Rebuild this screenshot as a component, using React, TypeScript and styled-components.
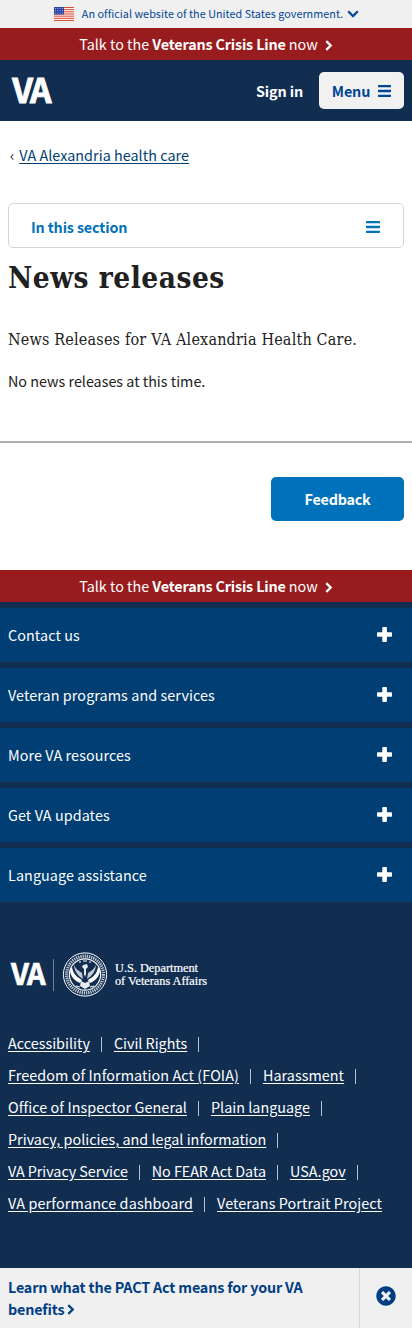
import React from 'react';
import styled, { createGlobalStyle } from 'styled-components';
import { FaTimesCircle } from 'react-icons/fa';

const GlobalStyle = createGlobalStyle`
  * { box-sizing: border-box; }
  body {
    margin: 0;
    background: #fff;
    color: #212121;
    font-family: "Noto Sans CJK SC", "Noto Sans", sans-serif;
    font-size: 14.35px;
    line-height: 24px;
  }
  a { color: inherit; text-decoration: none; }
  button { font: inherit; border: 0; margin: 0; padding: 0; cursor: pointer; }
  svg { display: block; flex: none; }
`;

const Page = styled.div`
  width: 100%;
  height: 1328px;
  display: flex;
  flex-direction: column;
`;

const GovBanner = styled.div`
  height: 28px;
  display: flex;
  align-items: center;
  justify-content: center;
  padding-left: 1px;
  background: #f0f0f0;
  color: #004795;
  font-size: 10.75px;
`;

const GovText = styled.span`
  margin: 0 4px 0 8px;
  letter-spacing: 0.06px;
`;

const CrisisLine = styled.a`
  height: 32px;
  display: flex;
  align-items: center;
  justify-content: center;
  gap: 7px;
  background: #981b1e;
  color: #fff;
  b { letter-spacing: -0.17px; }
  svg { margin-top: 3px; }
`;

const Header = styled.header`
  height: 61px;
  display: flex;
  align-items: center;
  padding: 0 8px 0 12px;
  background: #112e51;
  color: #fff;
`;

const SignIn = styled.a`
  margin-left: auto;
  margin-right: 16px;
  font-weight: 700;
  letter-spacing: -0.13px;
`;

const MenuButton = styled.button`
  width: 85px;
  height: 37px;
  display: flex;
  align-items: center;
  justify-content: center;
  gap: 8px;
  border-radius: 5px;
  background: #f1f1f1;
  color: #004795;
  font-weight: 700;
  letter-spacing: -0.15px;
`;

const Main = styled.main`
  height: 449px;
`;

const Breadcrumb = styled.nav`
  display: flex;
  gap: 5px;
  padding: 22px 10px 0;
  height: 82px;
  a {
    color: #003e73;
    letter-spacing: 0.04px;
    text-decoration: underline;
    text-underline-offset: 2px;
  }
`;

const SectionButton = styled.button`
  width: calc(100% - 16px);
  height: 45px;
  margin: 0 8px;
  padding: 3px 23px 0 22px;
  display: flex;
  align-items: center;
  justify-content: space-between;
  border: 1px solid #d6d7d9;
  border-radius: 5px;
  background: #fff;
  color: #0071bb;
  font-weight: 700;
  letter-spacing: -0.15px;
`;

const Title = styled.h1`
  margin: 10px 8px 0;
  font: 700 29.5px/39px "DejaVu Serif Condensed", "DejaVu Serif", serif;
  font-stretch: condensed;
  letter-spacing: 0.53px;
`;

const Intro = styled.p`
  margin: 30px 8px 0;
  font: 400 16px/26px "DejaVu Serif Condensed", "DejaVu Serif", serif;
  font-stretch: condensed;
  letter-spacing: 0.19px;
`;

const Body = styled.p`
  margin: 16px 8px 0;
`;

const FeedbackRow = styled.div`
  margin-top: 48px;
  padding: 34px 8px 0;
  border-top: 2px solid #aeb0b5;
  display: flex;
  justify-content: flex-end;
`;

const FeedbackButton = styled.button`
  width: 133px;
  height: 44px;
  border-radius: 5px;
  background: #0071bb;
  color: #fff;
  font-weight: 700;
  letter-spacing: -0.25px;
`;

const Footer = styled.footer`
  flex: 1;
  background: #112e51;
  color: #fff;
`;

const Accordion = styled.div`
  display: flex;
  flex-direction: column;
  gap: 6px;
  padding-top: 6px;
`;

const AccordionItem = styled.button`
  height: 54px;
  display: flex;
  align-items: center;
  justify-content: space-between;
  padding: 0 20px 0 8px;
  background: #003e73;
  color: #fff;
  letter-spacing: 0.09px;
  svg { margin-bottom: 1px; }
`;

const FooterLogo = styled.div`
  padding: 48px 8px 0;
`;

const Links = styled.div`
  padding: 29px 8px 0;
`;

const LinkRow = styled.div`
  display: flex;
  height: 32px;
  align-items: center;
`;

const FooterLink = styled.a<{ $divider: boolean; $tracking: number }>`
  display: flex;
  span {
    letter-spacing: ${(p) => p.$tracking}px;
    text-decoration: underline;
    text-underline-offset: 2px;
  }
  &::after {
    content: "";
    display: ${(p) => (p.$divider ? 'block' : 'none')};
    width: 1px;
    height: 15px;
    margin: 6px 12px 0 11px;
    background: #b4c4d8;
  }
`;

const Promo = styled.aside`
  height: 60px;
  display: flex;
  background: #f0f0f0;
  color: #003e84;
`;

const PromoText = styled.a`
  flex: 1;
  padding: 8px 40px 0 8px;
  font-weight: 700;
  line-height: 22px;
  letter-spacing: -0.17px;
  svg { display: inline-block; vertical-align: 0; margin-left: 3px; }
`;

const PromoClose = styled.button`
  width: 53px;
  display: flex;
  align-items: center;
  justify-content: center;
  padding-bottom: 4px;
  border-left: 1px solid #d6d7d9;
  background: transparent;
  color: #003e84;
`;

const ChevronRight = () => (
  <svg width="8" height="11" viewBox="0 0 8 11" fill="none" stroke="currentColor" strokeWidth="2.3">
    <path d="M1.3 1.1l4.4 4.4-4.4 4.4" />
  </svg>
);

const ChevronDown = () => (
  <svg width="12" height="8" viewBox="0 0 12 8" fill="none" stroke="currentColor" strokeWidth="2.2">
    <path d="M1.2 1.3L6 6.1l4.8-4.8" />
  </svg>
);

const Bars = ({ size = 14 }: { size?: number }) => (
  <svg width={size} height="12" viewBox="0 0 14 12" preserveAspectRatio="none" fill="currentColor">
    <rect width="14" height="2.3" rx=".4" />
    <rect y="4.85" width="14" height="2.3" rx=".4" />
    <rect y="9.7" width="14" height="2.3" rx=".4" />
  </svg>
);

const Plus = () => (
  <svg width="15" height="15" viewBox="0 0 15 15" fill="currentColor">
    <rect x="5.3" width="4.6" height="15" rx=".8" />
    <rect y="5.2" width="15" height="4.6" rx=".8" />
  </svg>
);

const Flag = () => (
  <svg width="20" height="14" viewBox="0 0 20 14">
    <rect width="20" height="14" fill="#fff" />
    {[0, 2, 4, 6, 8, 10, 12].map((y) => (
      <rect key={y} y={y * 1.077} width="20" height="1.077" fill="#dd4b35" />
    ))}
    <rect width="10" height="7.5" fill="#2b46a8" />
    {[1.5, 3.75, 6].map((y) =>
      [1.5, 3.8, 6.1, 8.4].map((x) => <circle key={`${x}-${y}`} cx={x} cy={y} r=".45" fill="#fff" />)
    )}
  </svg>
);

const Wordmark = () => (
  <svg width="40" height="40" viewBox="0 0 40 40" fill="#fff" overflow="visible">
    <text x=".3" y="32" fontFamily="Noto Sans CJK SC" fontWeight="700" fontSize="33.5" stroke="#fff" strokeWidth=".9" textLength="39.3" lengthAdjust="spacing">VA</text>
  </svg>
);

const DepartmentLogo = () => (
  <svg width="202" height="48" viewBox="0 0 202 48" fill="#fff">
    <text x="3" y="34.5" fontFamily="Noto Sans CJK SC" fontWeight="700" fontSize="29" stroke="#fff" strokeWidth=".7" textLength="34.5" lengthAdjust="spacing">VA</text>
    <path d="M45.5 9v32" stroke="#6d829e" />
    <g fill="none" stroke="#fff">
      <circle cx="77" cy="24.5" r="21.6" strokeWidth="1" />
      <circle cx="77" cy="24.5" r="18.4" strokeWidth="3.2" strokeDasharray="1.3 .9" opacity=".75" />
      <circle cx="77" cy="24.5" r="15.6" strokeWidth="1.1" />
    </g>
    <path d="M64 17c1 7 5 10 10 13l-2 3c-6-2-10-8-10-13zM90 17c-1 7-5 10-10 13l2 3c6-2 10-8 10-13z" />
    <path d="M66 14c1 5 5 7 8 9l1 6c-5-3-9-8-9-15zM88 14c-1 5-5 7-8 9l-1 6c5-3 9-8 9-15z" opacity=".75" />
    <path d="M75 15l4-1 1 3-2 2v5l-1 3-1-3v-5l-2-2zM73 31l4 2 4-2 1 5-5 3-5-3z" opacity=".9" />
    <path d="M71 12h2M75 11h4M81 12h2M68 36l4 1M82 37l4-1" stroke="#fff" fill="none" />
    <g fontFamily="Liberation Serif" fontSize="11.8" stroke="#fff" strokeWidth=".2">
      <text x="107" y="21.5" textLength="83" lengthAdjust="spacingAndGlyphs">U.S. Department</text>
      <text x="107" y="34.5" textLength="92" lengthAdjust="spacingAndGlyphs">of Veterans Affairs</text>
    </g>
  </svg>
);

const Crisis = () => (
  <CrisisLine href="#">
    <span>Talk to the <b>Veterans Crisis Line</b> now</span>
    <ChevronRight />
  </CrisisLine>
);

const sections = ['Contact us', 'Veteran programs and services', 'More VA resources', 'Get VA updates', 'Language assistance'];

const linkRows: { label: string; tracking: number }[][] = [
  [{ label: 'Accessibility', tracking: 0.02 }, { label: 'Civil Rights', tracking: -0.03 }],
  [{ label: 'Freedom of Information Act (FOIA)', tracking: 0.09 }, { label: 'Harassment', tracking: 0.06 }],
  [{ label: 'Office of Inspector General', tracking: 0.08 }, { label: 'Plain language', tracking: 0.02 }],
  [{ label: 'Privacy, policies, and legal information', tracking: 0.02 }],
  [{ label: 'VA Privacy Service', tracking: -0.05 }, { label: 'No FEAR Act Data', tracking: -0.06 }, { label: 'USA.gov', tracking: 0.07 }],
  [{ label: 'VA performance dashboard', tracking: 0.15 }, { label: 'Veterans Portrait Project', tracking: 0.09 }],
];

export default function App() {
  return (
    <Page>
      <GlobalStyle />
      <GovBanner>
        <Flag />
        <GovText>An official website of the United States government.</GovText>
        <ChevronDown />
      </GovBanner>
      <Crisis />
      <Header>
        <Wordmark />
        <SignIn href="#">Sign in</SignIn>
        <MenuButton>Menu <Bars size={13} /></MenuButton>
      </Header>
      <Main>
        <Breadcrumb>‹ <a href="#">VA Alexandria health care</a></Breadcrumb>
        <SectionButton>In this section <Bars /></SectionButton>
        <Title>News releases</Title>
        <Intro>News Releases for VA Alexandria Health Care.</Intro>
        <Body>No news releases at this time.</Body>
        <FeedbackRow>
          <FeedbackButton>Feedback</FeedbackButton>
        </FeedbackRow>
      </Main>
      <Crisis />
      <Footer>
        <Accordion>
          {sections.map((s) => (
            <AccordionItem key={s}>{s} <Plus /></AccordionItem>
          ))}
        </Accordion>
        <FooterLogo><DepartmentLogo /></FooterLogo>
        <Links>
          {linkRows.map((row, r) => (
            <LinkRow key={r}>
              {row.map(({ label, tracking }, i) => (
                <FooterLink key={label} href="#" $tracking={tracking} $divider={r < linkRows.length - 1 || i < row.length - 1}>
                  <span>{label}</span>
                </FooterLink>
              ))}
            </LinkRow>
          ))}
        </Links>
      </Footer>
      <Promo>
        <PromoText href="#">Learn what the PACT Act means for your VA benefits<ChevronRight /></PromoText>
        <PromoClose aria-label="Close"><FaTimesCircle size={20} /></PromoClose>
      </Promo>
    </Page>
  );
}
